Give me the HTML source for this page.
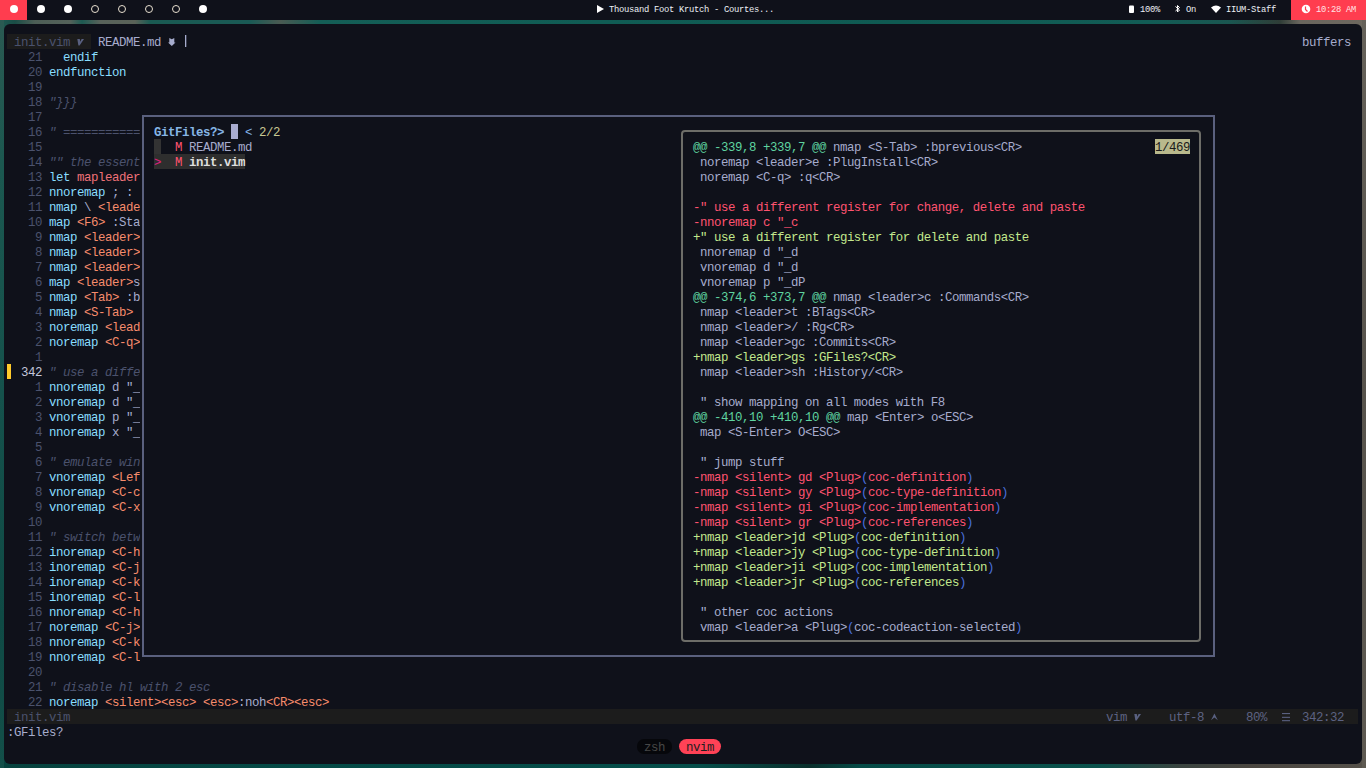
<!DOCTYPE html>
<html><head><meta charset="utf-8"><style>
*{margin:0;padding:0;box-sizing:border-box}
html,body{width:1366px;height:768px;overflow:hidden;background:#1d4f4c}
body{position:relative;font-family:"Liberation Mono",monospace}
#wall{position:absolute;left:0;top:0;width:1366px;height:768px;background:#134f49}
#wt{position:absolute;left:0;top:20px;width:1366px;height:14px;
 background:linear-gradient(90deg,#1e5a52 0px,#1a4d46 15px,#4d5e56 35px,#55625a 70px,#1d5a52 82px,#58625a 100px,#5a6258 135px,#1a5a52 150px,#1a5a55 250px,#4a5a52 280px,#145e56 320px,#105c54 600px,#0f5a52 900px,#125c55 1150px,#1a5650 1230px,#2f3d37 1280px,#6a665e 1300px,#6d685f 1366px)}
#wb{position:absolute;left:0;top:748px;width:1366px;height:20px;
 background:linear-gradient(90deg,#07423e 0px,#054a46 300px,#064e4a 700px,#0a2f2c 810px,#064b47 860px,#0b524c 1100px,#3a4440 1180px,#4a4640 1250px,#55514a 1366px)}
#wl{position:absolute;left:0;top:20px;width:4px;height:748px;background:linear-gradient(180deg,#2a5a52,#1b5850 20%,#15524c 50%,#0f4a45 80%,#134f49)}
#wr{position:absolute;left:1362px;top:20px;width:4px;height:748px;background:linear-gradient(180deg,#66625a,#57534c 50%,#5e5a52)}
#bar{position:absolute;left:0;top:0;width:1366px;height:20px;background:#0f111a;font-size:8.8px;color:#eceff4;letter-spacing:-0.2808px}
#bar i{position:absolute;font-style:normal;white-space:pre;line-height:20px;top:0}
#term{position:absolute;left:4px;top:24px;width:1358px;height:740px;background:#0f111a;border-radius:6px}
.g i{position:absolute;font-style:normal;white-space:pre;line-height:15px;height:15px;font-size:12.4px;letter-spacing:-0.4411px}
.ln{color:#4b526d} .lnc{color:#c3c6dc}
.kw{color:#89ddff} .fg{color:#a6accd} .cm{color:#4b526d;font-style:italic!important}
.og{color:#f78c6c} .vr{color:#f07178}
.tabi{color:#4b526d} .stl{color:#5c6282}
.pb{color:#86b6e6;font-weight:bold} .pb2{color:#82b4e8} .kh{color:#c8c793}
.mr{color:#ff5370} .pk{color:#e0207f} .sel{color:#dedede;font-weight:bold}
.hd{color:#5fd4a0} .rm{color:#ff5370} .ad{color:#c3e88d} .par{color:#4a6fdc}
.cnt{color:#1a1a1a}
</style></head>
<body>
<div id="wall"></div><div id="wt"></div><div id="wb"></div><div id="wl"></div><div id="wr"></div>
<div id="bar">
 <div style="position:absolute;left:0;top:0;width:27px;height:20px;background:#ff3d4f"></div>
 <svg style="position:absolute;left:0;top:0" width="230" height="20">
  <circle cx="14" cy="9" r="4" fill="#fff"/>
  <circle cx="41" cy="9" r="4" fill="#fff"/>
  <circle cx="68" cy="9" r="4" fill="#fff"/>
  <circle cx="95" cy="9" r="3.5" fill="none" stroke="#e8e0d0" stroke-width="1"/>
  <circle cx="122" cy="9" r="3.5" fill="none" stroke="#e8e0d0" stroke-width="1"/>
  <circle cx="149" cy="9" r="3.5" fill="none" stroke="#e8e0d0" stroke-width="1"/>
  <circle cx="176" cy="9" r="3.5" fill="none" stroke="#e8e0d0" stroke-width="1"/>
  <circle cx="203" cy="9" r="4" fill="#fff"/>
 </svg>
 <svg style="position:absolute;left:590px;top:0" width="20" height="20"><path d="M7 5 L14 9 L7 13 Z" fill="#fff"/></svg>
 <i style="left:609px">Thousand Foot Krutch - Courtes...</i>
 <svg style="position:absolute;left:1120px;top:0" width="110" height="20">
  <rect x="9" y="5.5" width="5" height="7.5" rx="1" fill="#fff"/>
  <path d="M55.5 6.5 L59.5 10 L57.5 12 L57.5 5.5 L59.5 7.5 L55.5 11" fill="none" stroke="#fff" stroke-width="1"/>
  <path d="M91 7.5 Q96 3.5 101 7.5 L96 13 Z" fill="#fff"/>
 </svg>
 <i style="left:1140px">100%</i>
 <i style="left:1186px">On</i>
 <i style="left:1226px">IIUM-Staff</i>
 <div style="position:absolute;left:1291px;top:0;width:75px;height:20px;background:#ff3d4f"></div>
 <svg style="position:absolute;left:1295px;top:0" width="20" height="20"><circle cx="11" cy="9" r="4.3" fill="#fff"/><path d="M10.5 6.5 L10.5 9.5 L12.5 11.5" stroke="#ff3d4f" stroke-width="1.2" fill="none"/></svg>
 <i style="left:1316px;color:#ffe3e6">10:28 AM</i>
</div>
<div id="term"></div>
<!-- tab bg & status bg -->
<div style="position:absolute;left:7px;top:34px;width:84px;height:15px;background:#1c1c1c"></div>
<div style="position:absolute;left:7px;top:709px;width:1351px;height:15px;background:#1c1c1c"></div>
<div style="position:absolute;left:7px;top:364px;width:4px;height:15px;background:#ffcb2b"></div>
<svg style="position:absolute;left:0;top:34px" width="200" height="15">
 <path d="M77.3 5 L79.8 5 L80.2 7.8 L81.6 5 L84 5 L79.6 11.6 L78.4 11.6 Z" fill="#596080"/>
 <path d="M169.3 4 L171.8 5.2 L174.3 4 L174.3 8.5 L175.5 8.5 L171.8 12 L168 8.5 L169.3 8.5 Z" fill="#a6accd"/>
 <rect x="185" y="1" width="1.3" height="12" fill="#a6accd"/>
</svg>
<svg style="position:absolute;left:0;top:709px" width="1366" height="15">
 <path d="M1134.3 5 L1136.8 5 L1137.2 7.8 L1138.6 5 L1141 5 L1136.6 11.6 L1135.4 11.6 Z" fill="#596080"/>
 <path d="M1211 11.2 L1214.4 4.6 L1217.8 11.2 L1214.4 8.6 Z" fill="#596080"/>
 <rect x="1282" y="4" width="8" height="1.1" fill="#596080"/><rect x="1282" y="7.8" width="8" height="1.1" fill="#596080"/><rect x="1282" y="11.1" width="8" height="1.1" fill="#596080"/>
</svg>
<div class="g">
<i class="ln" style="left:28px;top:51px">21</i>
<i class="kw" style="left:63px;top:51px">endif</i>
<i class="ln" style="left:28px;top:66px">20</i>
<i class="kw" style="left:49px;top:66px">endfunction</i>
<i class="ln" style="left:28px;top:81px">19</i>
<i class="ln" style="left:28px;top:96px">18</i>
<i class="cm" style="left:49px;top:96px">&quot;}}}</i>
<i class="ln" style="left:28px;top:111px">17</i>
<i class="ln" style="left:28px;top:126px">16</i>
<i class="cm" style="left:49px;top:126px">&quot; ============</i>
<i class="ln" style="left:28px;top:141px">15</i>
<i class="ln" style="left:28px;top:156px">14</i>
<i class="cm" style="left:49px;top:156px">&quot;&quot; the essent</i>
<i class="ln" style="left:28px;top:171px">13</i>
<i class="kw" style="left:49px;top:171px">let</i>
<i class="vr" style="left:77px;top:171px">mapleader</i>
<i class="ln" style="left:28px;top:186px">12</i>
<i class="kw" style="left:49px;top:186px">nnoremap</i>
<i class="fg" style="left:105px;top:186px"> ; :</i>
<i class="ln" style="left:28px;top:201px">11</i>
<i class="kw" style="left:49px;top:201px">nmap</i>
<i class="fg" style="left:77px;top:201px"> \ </i>
<i class="og" style="left:98px;top:201px">&lt;leade</i>
<i class="ln" style="left:28px;top:216px">10</i>
<i class="kw" style="left:49px;top:216px">map</i>
<i class="og" style="left:77px;top:216px">&lt;F6&gt;</i>
<i class="fg" style="left:105px;top:216px"> :Sta</i>
<i class="ln" style="left:35px;top:231px">9</i>
<i class="kw" style="left:49px;top:231px">nmap</i>
<i class="og" style="left:84px;top:231px">&lt;leader&gt;</i>
<i class="ln" style="left:35px;top:246px">8</i>
<i class="kw" style="left:49px;top:246px">nmap</i>
<i class="og" style="left:84px;top:246px">&lt;leader&gt;</i>
<i class="ln" style="left:35px;top:261px">7</i>
<i class="kw" style="left:49px;top:261px">nmap</i>
<i class="og" style="left:84px;top:261px">&lt;leader&gt;</i>
<i class="ln" style="left:35px;top:276px">6</i>
<i class="kw" style="left:49px;top:276px">map</i>
<i class="og" style="left:77px;top:276px">&lt;leader&gt;</i>
<i class="fg" style="left:133px;top:276px">s</i>
<i class="ln" style="left:35px;top:291px">5</i>
<i class="kw" style="left:49px;top:291px">nmap</i>
<i class="og" style="left:84px;top:291px">&lt;Tab&gt;</i>
<i class="fg" style="left:119px;top:291px"> :b</i>
<i class="ln" style="left:35px;top:306px">4</i>
<i class="kw" style="left:49px;top:306px">nmap</i>
<i class="og" style="left:84px;top:306px">&lt;S-Tab&gt;</i>
<i class="ln" style="left:35px;top:321px">3</i>
<i class="kw" style="left:49px;top:321px">noremap</i>
<i class="og" style="left:105px;top:321px">&lt;lead</i>
<i class="ln" style="left:35px;top:336px">2</i>
<i class="kw" style="left:49px;top:336px">noremap</i>
<i class="og" style="left:105px;top:336px">&lt;C-q&gt;</i>
<i class="ln" style="left:35px;top:351px">1</i>
<i class="lnc" style="left:21px;top:366px">342</i>
<i class="cm" style="left:49px;top:366px">&quot; use a diffe</i>
<i class="ln" style="left:35px;top:381px">1</i>
<i class="kw" style="left:49px;top:381px">nnoremap</i>
<i class="fg" style="left:105px;top:381px"> d &quot;_</i>
<i class="ln" style="left:35px;top:396px">2</i>
<i class="kw" style="left:49px;top:396px">vnoremap</i>
<i class="fg" style="left:105px;top:396px"> d &quot;_</i>
<i class="ln" style="left:35px;top:411px">3</i>
<i class="kw" style="left:49px;top:411px">vnoremap</i>
<i class="fg" style="left:105px;top:411px"> p &quot;_</i>
<i class="ln" style="left:35px;top:426px">4</i>
<i class="kw" style="left:49px;top:426px">nnoremap</i>
<i class="fg" style="left:105px;top:426px"> x &quot;_</i>
<i class="ln" style="left:35px;top:441px">5</i>
<i class="ln" style="left:35px;top:456px">6</i>
<i class="cm" style="left:49px;top:456px">&quot; emulate win</i>
<i class="ln" style="left:35px;top:471px">7</i>
<i class="kw" style="left:49px;top:471px">vnoremap</i>
<i class="og" style="left:112px;top:471px">&lt;Lef</i>
<i class="ln" style="left:35px;top:486px">8</i>
<i class="kw" style="left:49px;top:486px">vnoremap</i>
<i class="og" style="left:112px;top:486px">&lt;C-c</i>
<i class="ln" style="left:35px;top:501px">9</i>
<i class="kw" style="left:49px;top:501px">vnoremap</i>
<i class="og" style="left:112px;top:501px">&lt;C-x</i>
<i class="ln" style="left:28px;top:516px">10</i>
<i class="ln" style="left:28px;top:531px">11</i>
<i class="cm" style="left:49px;top:531px">&quot; switch betw</i>
<i class="ln" style="left:28px;top:546px">12</i>
<i class="kw" style="left:49px;top:546px">inoremap</i>
<i class="og" style="left:112px;top:546px">&lt;C-h</i>
<i class="ln" style="left:28px;top:561px">13</i>
<i class="kw" style="left:49px;top:561px">inoremap</i>
<i class="og" style="left:112px;top:561px">&lt;C-j</i>
<i class="ln" style="left:28px;top:576px">14</i>
<i class="kw" style="left:49px;top:576px">inoremap</i>
<i class="og" style="left:112px;top:576px">&lt;C-k</i>
<i class="ln" style="left:28px;top:591px">15</i>
<i class="kw" style="left:49px;top:591px">inoremap</i>
<i class="og" style="left:112px;top:591px">&lt;C-l</i>
<i class="ln" style="left:28px;top:606px">16</i>
<i class="kw" style="left:49px;top:606px">nnoremap</i>
<i class="og" style="left:112px;top:606px">&lt;C-h</i>
<i class="ln" style="left:28px;top:621px">17</i>
<i class="kw" style="left:49px;top:621px">noremap</i>
<i class="og" style="left:105px;top:621px">&lt;C-j&gt;</i>
<i class="ln" style="left:28px;top:636px">18</i>
<i class="kw" style="left:49px;top:636px">nnoremap</i>
<i class="og" style="left:112px;top:636px">&lt;C-k</i>
<i class="ln" style="left:28px;top:651px">19</i>
<i class="kw" style="left:49px;top:651px">nnoremap</i>
<i class="og" style="left:112px;top:651px">&lt;C-l</i>
<i class="ln" style="left:28px;top:666px">20</i>
<i class="ln" style="left:28px;top:681px">21</i>
<i class="cm" style="left:49px;top:681px">&quot; disable hl with 2 esc</i>
<i class="ln" style="left:28px;top:696px">22</i>
<i class="kw" style="left:49px;top:696px">noremap</i>
<i class="og" style="left:105px;top:696px">&lt;silent&gt;&lt;esc&gt;</i>
<i class="og" style="left:203px;top:696px">&lt;esc&gt;</i>
<i class="fg" style="left:238px;top:696px">:noh</i>
<i class="og" style="left:266px;top:696px">&lt;CR&gt;&lt;esc&gt;</i>
<i class="tabi" style="left:14px;top:36px">init.vim</i>
<i class="fg" style="left:98px;top:36px">README.md</i>
<i class="fg" style="left:1302px;top:36px">buffers</i>
<i class="tabi" style="left:14px;top:711px">init.vim</i>
<i class="stl" style="left:1106px;top:711px">vim</i>
<i class="stl" style="left:1169px;top:711px">utf-8</i>
<i class="stl" style="left:1246px;top:711px">80%</i>
<i class="stl" style="left:1302px;top:711px">342:32</i>
<i class="fg" style="left:7px;top:726px">:GFiles?</i>
</div>
<!-- popup -->
<div style="position:absolute;left:140px;top:109px;width:1078px;height:555px;background:#0f111a"></div>
<div style="position:absolute;left:142px;top:115px;width:1073px;height:542px;border:2px solid #5a607e"></div>
<div style="position:absolute;left:681px;top:130px;width:520px;height:512px;border:2px solid #6d6d68;border-radius:4px"></div>
<div style="position:absolute;left:154px;top:139px;width:7px;height:15px;background:#333333"></div>
<div style="position:absolute;left:154px;top:154px;width:91px;height:15px;background:#2e2e2e"></div>
<div style="position:absolute;left:231px;top:124px;width:7px;height:15px;background:#a9acd0"></div>
<div style="position:absolute;left:1155px;top:139px;width:35px;height:15px;background:#b9b98c"></div>
<div class="g">
<i class="pb" style="left:154px;top:126px">GitFiles?&gt;</i>
<i class="pb2" style="left:245px;top:126px">&lt;</i>
<i class="kh" style="left:259px;top:126px">2/2</i>
<i class="mr" style="left:175px;top:141px">M</i>
<i class="fg" style="left:189px;top:141px">README.md</i>
<i class="pk" style="left:154px;top:156px">&gt;</i>
<i class="mr" style="left:175px;top:156px">M</i>
<i class="sel" style="left:189px;top:156px">init.vim</i>
<i class="hd" style="left:693px;top:141px">@@ -339,8 +339,7 @@</i>
<i class="fg" style="left:826px;top:141px"> nmap &lt;S-Tab&gt; :bprevious&lt;CR&gt;</i>
<i class="fg" style="left:693px;top:156px"> noremap &lt;leader&gt;e :PlugInstall&lt;CR&gt;</i>
<i class="fg" style="left:693px;top:171px"> noremap &lt;C-q&gt; :q&lt;CR&gt;</i>
<i class="rm" style="left:693px;top:201px">-&quot; use a different register for change, delete and paste</i>
<i class="rm" style="left:693px;top:216px">-nnoremap c &quot;_c</i>
<i class="ad" style="left:693px;top:231px">+&quot; use a different register for delete and paste</i>
<i class="fg" style="left:693px;top:246px"> nnoremap d &quot;_d</i>
<i class="fg" style="left:693px;top:261px"> vnoremap d &quot;_d</i>
<i class="fg" style="left:693px;top:276px"> vnoremap p &quot;_dP</i>
<i class="hd" style="left:693px;top:291px">@@ -374,6 +373,7 @@</i>
<i class="fg" style="left:826px;top:291px"> nmap &lt;leader&gt;c :Commands&lt;CR&gt;</i>
<i class="fg" style="left:693px;top:306px"> nmap &lt;leader&gt;t :BTags&lt;CR&gt;</i>
<i class="fg" style="left:693px;top:321px"> nmap &lt;leader&gt;/ :Rg&lt;CR&gt;</i>
<i class="fg" style="left:693px;top:336px"> nmap &lt;leader&gt;gc :Commits&lt;CR&gt;</i>
<i class="ad" style="left:693px;top:351px">+nmap &lt;leader&gt;gs :GFiles?&lt;CR&gt;</i>
<i class="fg" style="left:693px;top:366px"> nmap &lt;leader&gt;sh :History/&lt;CR&gt;</i>
<i class="fg" style="left:693px;top:396px"> &quot; show mapping on all modes with F8</i>
<i class="hd" style="left:693px;top:411px">@@ -410,10 +410,10 @@</i>
<i class="fg" style="left:840px;top:411px"> map &lt;Enter&gt; o&lt;ESC&gt;</i>
<i class="fg" style="left:693px;top:426px"> map &lt;S-Enter&gt; O&lt;ESC&gt;</i>
<i class="fg" style="left:693px;top:456px"> &quot; jump stuff</i>
<i class="rm" style="left:693px;top:471px">-nmap &lt;silent&gt; gd &lt;Plug&gt;</i>
<i class="par" style="left:861px;top:471px">(</i>
<i class="rm" style="left:868px;top:471px">coc-definition</i>
<i class="par" style="left:966px;top:471px">)</i>
<i class="rm" style="left:693px;top:486px">-nmap &lt;silent&gt; gy &lt;Plug&gt;</i>
<i class="par" style="left:861px;top:486px">(</i>
<i class="rm" style="left:868px;top:486px">coc-type-definition</i>
<i class="par" style="left:1001px;top:486px">)</i>
<i class="rm" style="left:693px;top:501px">-nmap &lt;silent&gt; gi &lt;Plug&gt;</i>
<i class="par" style="left:861px;top:501px">(</i>
<i class="rm" style="left:868px;top:501px">coc-implementation</i>
<i class="par" style="left:994px;top:501px">)</i>
<i class="rm" style="left:693px;top:516px">-nmap &lt;silent&gt; gr &lt;Plug&gt;</i>
<i class="par" style="left:861px;top:516px">(</i>
<i class="rm" style="left:868px;top:516px">coc-references</i>
<i class="par" style="left:966px;top:516px">)</i>
<i class="ad" style="left:693px;top:531px">+nmap &lt;leader&gt;jd &lt;Plug&gt;</i>
<i class="par" style="left:854px;top:531px">(</i>
<i class="ad" style="left:861px;top:531px">coc-definition</i>
<i class="par" style="left:959px;top:531px">)</i>
<i class="ad" style="left:693px;top:546px">+nmap &lt;leader&gt;jy &lt;Plug&gt;</i>
<i class="par" style="left:854px;top:546px">(</i>
<i class="ad" style="left:861px;top:546px">coc-type-definition</i>
<i class="par" style="left:994px;top:546px">)</i>
<i class="ad" style="left:693px;top:561px">+nmap &lt;leader&gt;ji &lt;Plug&gt;</i>
<i class="par" style="left:854px;top:561px">(</i>
<i class="ad" style="left:861px;top:561px">coc-implementation</i>
<i class="par" style="left:987px;top:561px">)</i>
<i class="ad" style="left:693px;top:576px">+nmap &lt;leader&gt;jr &lt;Plug&gt;</i>
<i class="par" style="left:854px;top:576px">(</i>
<i class="ad" style="left:861px;top:576px">coc-references</i>
<i class="par" style="left:959px;top:576px">)</i>
<i class="fg" style="left:693px;top:606px"> &quot; other coc actions</i>
<i class="fg" style="left:693px;top:621px"> vmap &lt;leader&gt;a &lt;Plug&gt;</i>
<i class="par" style="left:847px;top:621px">(</i>
<i class="fg" style="left:854px;top:621px">coc-codeaction-selected</i>
<i class="par" style="left:1015px;top:621px">)</i>
<i class="cnt" style="left:1155px;top:141px">1/469</i>
</div>
<!-- tmux status -->
<div style="position:absolute;left:637px;top:739px;width:35px;height:15px;border-radius:7px;background:#06070b"></div>
<div style="position:absolute;left:679px;top:739px;width:42px;height:15px;border-radius:7.5px;background:#ff4256"></div>
<div class="g">
<i style="left:644px;top:741px;color:#474747">zsh</i>
<i style="left:686px;top:741px;color:#1e1e1e">nvim</i>
</div>
</body></html>
